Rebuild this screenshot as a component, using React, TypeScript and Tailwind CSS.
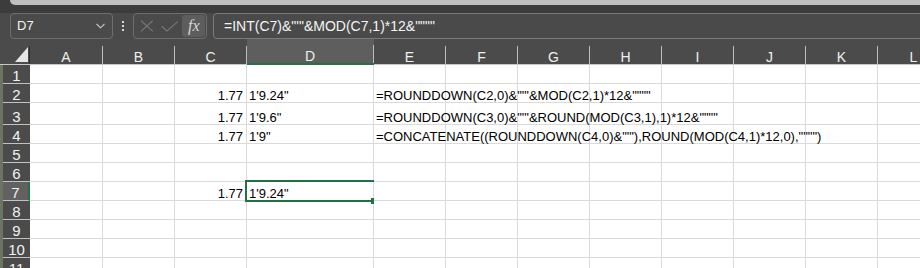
import React from "react";

type Col = { l: string; w: string };
const cols: Col[] = [
  { l: "A", w: "w-[73px]" },
  { l: "B", w: "w-[72px]" },
  { l: "C", w: "w-[72px]" },
  { l: "D", w: "w-[127px]" },
  { l: "E", w: "w-[72px]" },
  { l: "F", w: "w-[72px]" },
  { l: "G", w: "w-[72px]" },
  { l: "H", w: "w-[72px]" },
  { l: "I", w: "w-[72px]" },
  { l: "J", w: "w-[72px]" },
  { l: "K", w: "w-[72px]" },
  { l: "L", w: "w-[72px]" },
];

type Row = { n: number; h: string; c?: string; d?: string; e?: string };
const rows: Row[] = [
  { n: 1, h: "h-[19px]" },
  { n: 2, h: "h-[19px]", c: "1.77", d: "1'9.24\"", e: "=ROUNDDOWN(C2,0)&\"'\"&MOD(C2,1)*12&\"\"\"\"" },
  { n: 3, h: "h-[22px]", c: "1.77", d: "1'9.6\"", e: "=ROUNDDOWN(C3,0)&\"'\"&ROUND(MOD(C3,1),1)*12&\"\"\"\"" },
  { n: 4, h: "h-[19px]", c: "1.77", d: "1'9\"", e: "=CONCATENATE((ROUNDDOWN(C4,0)&\"'\"),ROUND(MOD(C4,1)*12,0),\"\"\"\")" },
  { n: 5, h: "h-[19px]" },
  { n: 6, h: "h-[19px]" },
  { n: 7, h: "h-[19px]", c: "1.77", d: "1'9.24\"" },
  { n: 8, h: "h-[19px]" },
  { n: 9, h: "h-[19px]" },
  { n: 10, h: "h-[19px]" },
  { n: 11, h: "h-[19px]" },
];

const cellFont = "font-[Liberation_Sans,Arial,sans-serif] text-[13px] leading-[12px] text-black";

export default function App() {
  return (
    <div className="relative w-[920px] h-[268px] overflow-hidden bg-[#4a4a4a] flex flex-col font-[Liberation_Sans,Arial,sans-serif]">
      {/* top strip */}
      <div className="h-[13px] shrink-0 bg-[#3c3c3c]">
        <div className="ml-[10px] h-[5px] bg-[#bfbfbf] rounded-bl-[5px]" />
      </div>

      {/* formula row */}
      <div className="h-[26px] shrink-0 flex items-stretch pl-[10px] bg-[#4a4a4a]">
        <div className="w-[103px] border border-[#6e6e6e] rounded-[4px] flex items-center pl-[6px] pr-[6px] justify-between">
          <span className="text-[13px] text-[#f2f2f2]">D7</span>
          <svg width="9" height="6" viewBox="0 0 9 6" className="mr-[1px]">
            <path d="M0.5 0.8 L4.5 4.8 L8.5 0.8" fill="none" stroke="#d0d0d0" strokeWidth="1.1" />
          </svg>
        </div>
        <div className="w-[20px] flex flex-col items-center justify-center gap-[2px]">
          <div className="w-[2px] h-[2px] bg-[#d8d8d8]" />
          <div className="w-[2px] h-[2px] bg-[#d8d8d8]" />
          <div className="w-[2px] h-[2px] bg-[#d8d8d8]" />
        </div>
        <div className="w-[74px] border border-[#6e6e6e] rounded-[4px] flex items-center pl-[5px] pr-[1px]">
          <svg width="14" height="12" viewBox="0 0 14 12" className="ml-[1px]">
            <path d="M1 0.5 L13 11.5 M13 0.5 L1 11.5" stroke="#7c7c7c" strokeWidth="1.1" fill="none" />
          </svg>
          <svg width="18" height="11" viewBox="0 0 18 11" className="ml-[7px]">
            <path d="M0.8 5 L6 10.2 L17 0.5" stroke="#7c7c7c" strokeWidth="1.1" fill="none" />
          </svg>
          <div className="ml-[4px] w-[23px] h-[22px] rounded-[3px] bg-[#5d5d5d] flex items-center justify-center">
            <span className="font-[Liberation_Serif,serif] italic text-[16px] text-[#d8d8d8] leading-none">fx</span>
          </div>
        </div>
        <div className="ml-[6px] flex-1 -mr-[12px] border border-[#7a7a7a] rounded-[4px] flex items-center pl-[10px]">
          <span className="text-[14px] text-[#f4f4f4] whitespace-nowrap">=INT(C7)&amp;"'"&amp;MOD(C7,1)*12&amp;""""</span>
        </div>
      </div>

      {/* column header */}
      <div className="h-[26px] shrink-0 flex bg-[#4b4b4b] border-b border-[#c8c8c8]">
        <div className="w-[30px] shrink-0 flex items-end">
          <svg width="29" height="25" viewBox="0 0 29 25" className="shrink-0">
            <polygon points="28,8 28,23 15,23" fill="#e6e6e6" />
          </svg>
          <div className="w-px h-[18px] bg-[#2e2e2e] shrink-0" />
        </div>
        {cols.map((c) => (
          <div
            key={c.l}
            className={`${c.w} shrink-0 flex items-end ${c.l === "D" ? "bg-[#5e5e5e] border-b-2 border-[#1f7244] -mb-px" : ""}`}
          >
            <span className="flex-1 text-center text-[14px] leading-[14px] text-[#f0f0f0]">{c.l}</span>
            <div className="w-px h-[18px] bg-[#bdbdbd] shrink-0" />
          </div>
        ))}
      </div>

      {/* rows */}
      <div className="flex flex-col">
        {rows.map((r) => (
          <div key={r.n} className={`${r.h} shrink-0 flex`}>
            <div className="w-[3px] shrink-0 bg-[#6b7561]" />
            <div
              className={`w-[27px] shrink-0 flex items-end justify-center border-b border-[#c2c2c2] ${
                r.n === 7 ? "bg-[#616161] border-r-2 border-r-[#1f7244]" : "bg-[#4b4b4b]"
              }`}
            >
              <span className="text-[15px] leading-[14px] text-[#f2f2f2]">{r.n}</span>
            </div>
            {cols.map((c) => (
              <div
                key={c.l}
                className={`${c.w} shrink-0 bg-white border-r border-b border-[#dadada] flex items-end ${
                  c.l === "C" ? "justify-end pr-[3px]" : "pl-[2px]"
                } ${c.l === "E" ? "relative z-10 overflow-visible" : ""}`}
              >
                {c.l === "C" && r.c && <span className={cellFont}>{r.c}</span>}
                {c.l === "D" && r.d && <span className={cellFont}>{r.d}</span>}
                {c.l === "E" && r.e && (
                  <span className={`${cellFont} whitespace-nowrap`}>{r.e}</span>
                )}
              </div>
            ))}
          </div>
        ))}
      </div>

      {/* active cell selection */}
      <div className="absolute left-[245px] top-[180px] w-[131px] h-[22px] border-2 border-[#1f7244] pointer-events-none" />
      <div className="absolute left-[371px] top-[198px] w-[6px] h-[6px] bg-[#1f7244] pointer-events-none" />
    </div>
  );
}
